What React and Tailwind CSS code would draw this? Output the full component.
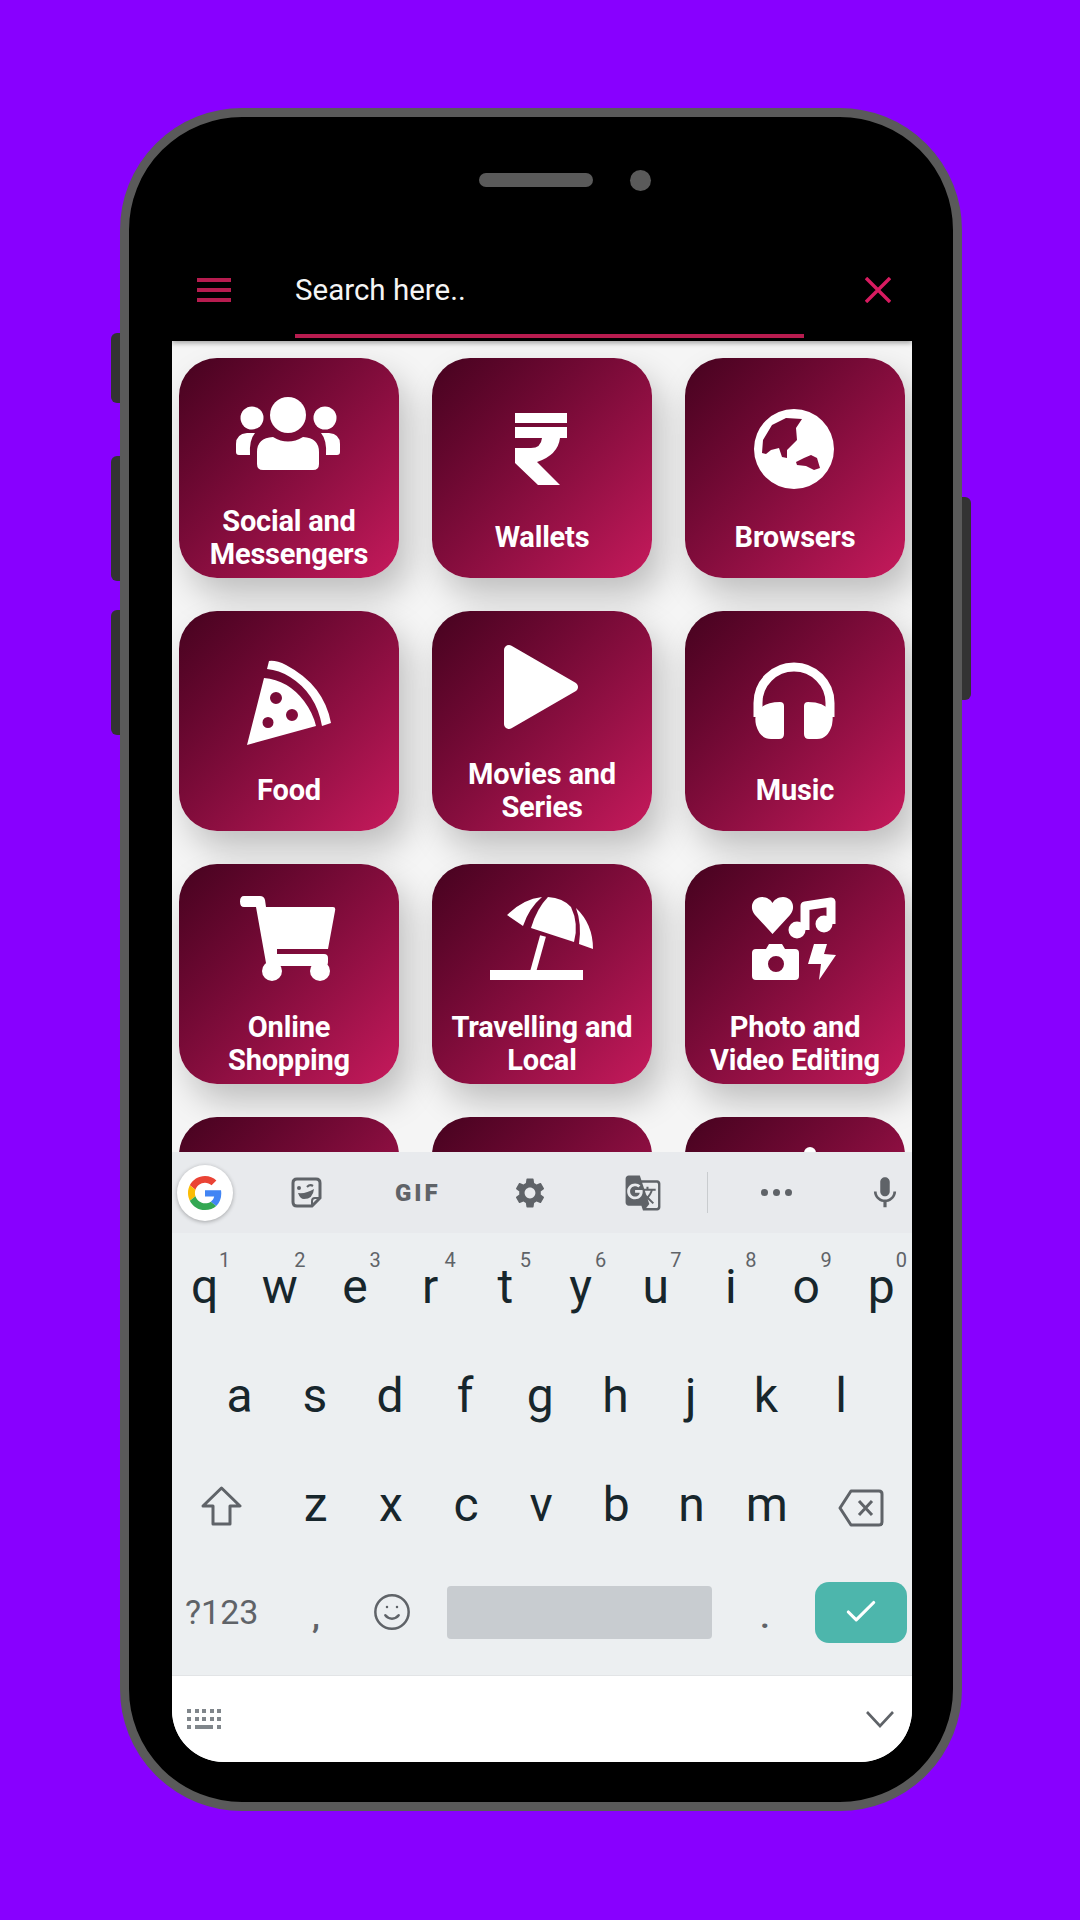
import { Check, Smile } from 'lucide-react';
import { MdSettings, MdMic, MdGTranslate } from 'react-icons/md';

const Svg = ({ children }) => (
    <svg viewBox="0 0 110 110" className="w-[110px] h-[110px] overflow-visible" fill="#fff">
        {children}
    </svg>
);

const PeopleIcon = () => (
    <Svg>
        <circle cx="54" cy="35" r="18" />
        <circle cx="18" cy="38" r="11.5" />
        <circle cx="91" cy="38" r="11.5" />
        <path d="M23 84V72Q23 58 39 57Q54 66 69 57Q85 58 85 72V84Q85 90 79 90H29Q23 90 23 84Z" />
        <path d="M2 72V64Q2 54 13 53L21 53Q15 60 16 75H5Q2 75 2 72Z" />
        <path d="M106 72V64Q106 54 95 53L87 53Q93 60 92 75H103Q106 75 106 72Z" />
    </Svg>
);

const RupeeIcon = () => (
    <Svg>
        <path d="M28 33H80V43H28ZM28 47H80V58H28Z" />
        <path d="M28 68H44Q54 68 55 58H73Q71 75 50 82L73 105H51L28 83Z" />
    </Svg>
);

const GlobeIcon = () => (
    <Svg>
        <path
            fillRule="evenodd"
            d="M54 29a40 40 0 1 0 0 80a40 40 0 1 0 0-80ZM22 73L23 60L32 45L46 38L62 39L56 48L57 60L47 70L47 78L42 77L39 68L31 70L26 74ZM56 82L64 78L71 75L77 78L80 88L74 90L66 86L57 85Z"
        />
    </Svg>
);

const PizzaIcon = () => (
    <Svg>
        <path d="M35 28Q42 27 52 32Q90 52 97 90L88 93Q82 60 56 44Q45 37 33 36Z" />
        <path
            fillRule="evenodd"
            d="M30 45Q54 47 70 68Q79 80 82 93L13 112ZM42 59a6 6 0 1 0 0 12a6 6 0 1 0 0-12ZM58 76a6 6 0 1 0 0 12a6 6 0 1 0 0-12ZM34 84a5.5 5.5 0 1 0 0 11a5.5 5.5 0 1 0 0-11Z"
        />
    </Svg>
);

const PlayIcon = () => (
    <Svg>
        <path d="M22 17L86 54L22 91Z" stroke="#fff" strokeWidth="10" strokeLinejoin="round" />
    </Svg>
);

const HeadphonesIcon = () => (
    <Svg>
        <path d="M18 84V70A36 36 0 0 1 90 70V84" fill="none" stroke="#fff" strokeWidth="9" />
        <path d="M44 73V101Q44 106 39 106H31Q20 106 16 92Q14 82 18 78Q24 69 40 69Q44 69 44 73Z" />
        <path d="M64 73V101Q64 106 69 106H77Q88 106 92 92Q94 82 90 78Q84 69 68 69Q64 69 64 73Z" />
    </Svg>
);

const CartIcon = () => (
    <Svg>
        <path d="M10 10H26Q30 10 31 14L32 21H99Q102 21 101 25L94 63H43V68H90Q94 68 94 72V76Q94 80 90 80H36Q33 80 32 77L22 21H10Q6 21 6 15.5Q6 10 10 10Z" />
        <circle cx="38" cy="85" r="10" />
        <circle cx="86" cy="85" r="10" />
    </Svg>
);

const UmbrellaIcon = () => (
    <Svg>
        <path d="M20 29Q36 13 55 11Q42 22 36 40Z" />
        <path d="M61 11Q76 12 84 21Q92 38 87 56L44 42Q50 22 61 11Z" />
        <path d="M89 22Q106 38 106 63L92 58Q95 38 89 22Z" />
        <path d="M56 50L46 86" stroke="#fff" strokeWidth="6" />
        <path d="M3 84H96V94H3Z" />
    </Svg>
);

const MediaIcon = () => (
    <Svg>
        <path d="M32.5 48L15 29C8 20 14 11 22 11C27 11 31 14 32.5 17C34 14 38 11 43 11C51 11 57 20 50 29Z" />
        <path d="M65 44V20L91 16V38" fill="none" stroke="#fff" strokeWidth="9" strokeLinejoin="round" />
        <circle cx="57" cy="44" r="8.5" />
        <circle cx="84" cy="38" r="8.5" />
        <path
            fillRule="evenodd"
            d="M26 63L29 58H42L45 63H55Q59 63 59 67V90Q59 94 55 94H16Q12 94 12 90V67Q12 63 16 63ZM36 70a8 8 0 1 0 0 16a8 8 0 1 0 0-16Z"
        />
        <path d="M74 58H87L84 68L96 69L79 94L81 78H68Z" />
    </Svg>
);

const categories = [
    { lines: ['Social and', 'Messengers'], icon: <PeopleIcon /> },
    { lines: ['Wallets'], icon: <RupeeIcon /> },
    { lines: ['Browsers'], icon: <GlobeIcon /> },
    { lines: ['Food'], icon: <PizzaIcon /> },
    { lines: ['Movies and', 'Series'], icon: <PlayIcon /> },
    { lines: ['Music'], icon: <HeadphonesIcon /> },
    { lines: ['Online', 'Shopping'], icon: <CartIcon /> },
    { lines: ['Travelling and', 'Local'], icon: <UmbrellaIcon /> },
    { lines: ['Photo and', 'Video Editing'], icon: <MediaIcon /> },
];

function CategoryCard({ lines, icon }) {
    return (
        <div className="w-[220px] h-[220px] rounded-[38px] bg-linear-to-br from-[#46031f] to-[#c61a5c] shadow-[10px_18px_34px_rgba(0,0,0,0.22)] flex flex-col items-center text-white">
            <div className="mt-[22px] w-[110px] h-[110px]">{icon}</div>
            <div className="mt-[14px] h-[67px] flex flex-col justify-center items-center text-[29px] leading-[33px] font-bold tracking-[-0.2px] whitespace-nowrap">
                {lines.map((line) => (
                    <span key={line}>{line}</span>
                ))}
            </div>
        </div>
    );
}

const row1 = [
    ['q', '1'], ['w', '2'], ['e', '3'], ['r', '4'], ['t', '5'],
    ['y', '6'], ['u', '7'], ['i', '8'], ['o', '9'], ['p', '0'],
];

const Key = ({ label, hint }) => (
    <div className="relative shrink-0 w-[75.2px] flex justify-center">
        <span>{label}</span>
        {hint && (
            <span className="absolute left-[52px] top-[-19px] text-[20px] leading-[18px] text-[#5f6368]">{hint}</span>
        )}
    </div>
);

function Keyboard() {
    return (
        <div className="shrink-0 text-[48px] leading-[34px] text-[#17262c] bg-[#eceff1]">
            <div className="h-[81px] bg-[#e8eaed] flex items-center text-[#5f6368]">
                <div className="ml-[5px] w-[56px] h-[56px] rounded-full bg-white shadow-[0_1px_4px_rgba(0,0,0,0.3)] flex items-center justify-center">
                    <svg viewBox="0 0 48 48" className="w-[34px] h-[34px]">
                        <path fill="#EA4335" d="M24 9.5c3.54 0 6.71 1.22 9.21 3.6l6.85-6.85C35.9 2.38 30.47 0 24 0 14.62 0 6.51 5.38 2.56 13.22l7.98 6.19C12.43 13.72 17.74 9.5 24 9.5z" />
                        <path fill="#4285F4" d="M46.98 24.55c0-1.57-.15-3.09-.38-4.55H24v9.02h12.94c-.58 2.96-2.26 5.48-4.78 7.18l7.73 6c4.51-4.18 7.09-10.36 7.09-17.65z" />
                        <path fill="#FBBC05" d="M10.53 28.59c-.48-1.45-.76-2.99-.76-4.59s.27-3.14.76-4.59l-7.98-6.19C.92 16.46 0 20.12 0 24c0 3.88.92 7.54 2.56 10.78l7.97-6.19z" />
                        <path fill="#34A853" d="M24 48c6.48 0 11.93-2.13 15.89-5.81l-7.73-6c-2.15 1.45-4.92 2.3-8.16 2.3-6.26 0-11.57-4.22-13.47-9.91l-7.98 6.19C6.51 42.62 14.62 48 24 48z" />
                    </svg>
                </div>
                <svg viewBox="0 0 31 31" className="ml-[58px] w-[31px] h-[31px]" fill="none" stroke="#5f6368" strokeWidth="3">
                    <path d="M6 2H25Q29 2 29 6V21L21 29H6Q2 29 2 25V6Q2 2 6 2Z" />
                    <path d="M21 29V24Q21 21 24 21H29" strokeWidth="2" />
                    <circle cx="8" cy="11" r="2" fill="#5f6368" stroke="none" />
                    <path d="M16 10Q19 7 22 9" strokeWidth="2.2" />
                    <path d="M7 16Q15 17 23 12Q22 22 13 22Q9 22 7 16Z" fill="#5f6368" stroke="none" />
                </svg>
                <span className="ml-[73px] w-[44px] text-[24px] leading-[24px] font-black tracking-[3px] text-[#5f6368]">GIF</span>
                <MdSettings className="ml-[73px] w-[36px] h-[36px]" color="#5f6368" />
                <MdGTranslate className="ml-[76px] w-[38px] h-[38px]" color="#5f6368" />
                <div className="ml-[45px] w-px h-[41px] bg-[#c9cccf]" />
                <div className="ml-[53px] w-[31px] flex justify-between">
                    <div className="w-[7px] h-[7px] rounded-full bg-[#5f6368]" />
                    <div className="w-[7px] h-[7px] rounded-full bg-[#5f6368]" />
                    <div className="w-[7px] h-[7px] rounded-full bg-[#5f6368]" />
                </div>
                <MdMic className="ml-[74px] w-[38px] h-[38px]" color="#5f6368" />
            </div>

            <div className="h-[108px] flex items-center ml-[-5px]">
                {row1.map(([label, hint]) => (
                    <Key key={label} label={label} hint={hint} />
                ))}
            </div>
            <div className="h-[110px] flex items-center ml-[30px]">
                {['a', 's', 'd', 'f', 'g', 'h', 'j', 'k', 'l'].map((label) => (
                    <Key key={label} label={label} />
                ))}
            </div>
            <div className="h-[108px] flex items-center">
                <div className="w-[106px] pl-[29px] pt-[2px]">
                    <svg viewBox="0 0 41 40" className="w-[41px] h-[40px]" fill="none" stroke="#5f6368" strokeWidth="3">
                        <path d="M20.5 2L39 20H29V38H12V20H2Z" strokeLinejoin="round" />
                    </svg>
                </div>
                {['z', 'x', 'c', 'v', 'b', 'n', 'm'].map((label) => (
                    <Key key={label} label={label} />
                ))}
                <svg viewBox="0 0 46 38" className="ml-[33px] mt-[6px] w-[48px] h-[38px]" fill="none" stroke="#5f6368" strokeWidth="3">
                    <path d="M13 2H41Q44 2 44 5V33Q44 36 41 36H13L2 19Z" strokeLinejoin="round" />
                    <path d="M21 12L34 26M34 12L21 26" />
                </svg>
            </div>
            <div className="h-[106px] flex items-center text-[#5f6368]">
                <span className="w-[100px] pl-[13px] text-[34px] leading-[40px]">?123</span>
                <span className="w-[88px] text-center text-[32px] leading-[40px] font-bold pt-[10px]">,</span>
                <Smile className="ml-[12px] w-[40px] h-[40px]" strokeWidth={1.5} />
                <div className="ml-[35px] w-[265px] h-[53px] rounded-[4px] bg-[#c8ccd0]" />
                <span className="w-[106px] text-center text-[32px] leading-[40px] font-bold pt-[10px]">.</span>
                <div className="ml-[-3px] w-[92px] h-[61px] rounded-[14px] bg-[#4db6ac] flex items-center justify-center">
                    <Check className="w-[38px] h-[38px] text-white" strokeWidth={2} />
                </div>
            </div>
            <div className="h-[10px]" />
            <div className="h-[87px] bg-white border-t border-[#e2e4e6] flex items-center justify-between pl-[15px] pr-[18px]">
                <div className="grid grid-cols-5 gap-x-[4px] gap-y-[4px] w-[34px]">
                    {Array.from({ length: 10 }).map((_, i) => (
                        <div key={i} className="w-[4px] h-[4px] bg-[#80868b]" />
                    ))}
                    <div className="w-[4px] h-[4px] bg-[#80868b]" />
                    <div className="col-span-3 h-[4px] bg-[#80868b]" />
                    <div className="w-[4px] h-[4px] bg-[#80868b]" />
                </div>
                <svg viewBox="0 0 28 17" className="w-[28px] h-[17px]" fill="none" stroke="#5f6368" strokeWidth="2.6">
                    <path d="M1 1L14 15L27 1" />
                </svg>
            </div>
        </div>
    );
}

export default function App() {
    return (
        <div className="w-[1080px] h-[1920px] bg-[#8800ff] pl-[120px] pt-[108px] font-['Roboto',sans-serif] overflow-hidden">
            <div className="relative w-[842px] h-[1703px] rounded-[122px] border-[9px] border-[#5a5a5a] bg-black pl-[43px]">
                {/* side buttons */}
                <div className="absolute left-[-18px] top-[216px] w-[9px] h-[70px] rounded-l-[6px] bg-[#333]" />
                <div className="absolute left-[-18px] top-[339px] w-[9px] h-[125px] rounded-l-[6px] bg-[#333]" />
                <div className="absolute left-[-18px] top-[493px] w-[9px] h-[125px] rounded-l-[6px] bg-[#333]" />
                <div className="absolute right-[-18px] top-[380px] w-[9px] h-[203px] rounded-r-[6px] bg-[#333]" />

                <div className="w-[740px] h-[1645px] rounded-t-[100px] rounded-b-[52px] overflow-hidden flex flex-col">
                    <div className="relative z-10 shrink-0 h-[224px] bg-black shadow-[0_2px_5px_rgba(0,0,0,0.35)]">
                        <div className="pt-[52px] h-[74px] flex items-center pl-[307px]">
                            <div className="w-[114px] h-[14px] rounded-full bg-[#5a5a5a]" />
                            <div className="ml-[37px] w-[21px] h-[21px] rounded-full bg-[#5a5a5a]" />
                        </div>
                        <div className="mt-[71px] flex items-start pl-[25px]">
                            <div className="mt-[16px] w-[34px] h-[24px] flex flex-col justify-between">
                                <div className="h-[4px] bg-[#b71c4f]" />
                                <div className="h-[4px] bg-[#b71c4f]" />
                                <div className="h-[4px] bg-[#b71c4f]" />
                            </div>
                            <div className="ml-[64px] w-[509px] h-[76px] border-b-[4px] border-[#b71c4f]">
                                <span className="block h-[56px] leading-[56px] text-[29.5px] text-[#f5f5f5]">Search here..</span>
                            </div>
                            <svg viewBox="0 0 26 26" className="ml-[61px] mt-[15px] w-[26px] h-[26px]" stroke="#d81b60" strokeWidth="3.4">
                                <path d="M1 1L25 25M25 1L1 25" />
                            </svg>
                        </div>
                    </div>

                    <div className="flex-1 min-h-0 overflow-hidden bg-[#f5f5f5] pt-[17px] px-[7px]">
                        <div className="grid grid-cols-[220px_220px_220px] justify-between gap-y-[33px]">
                            {categories.map((category) => (
                                <CategoryCard key={category.lines[0]} lines={category.lines} icon={category.icon} />
                            ))}
                            <div className="w-[220px] h-[220px] rounded-[38px] bg-linear-to-br from-[#46031f] to-[#c61a5c]" />
                            <div className="w-[220px] h-[220px] rounded-[38px] bg-linear-to-br from-[#46031f] to-[#c61a5c]" />
                            <div className="w-[220px] h-[220px] rounded-[38px] bg-linear-to-br from-[#46031f] to-[#c61a5c] flex justify-center pl-[30px] pt-[30px]">
                                <div className="w-[12px] h-[6px] rounded-t-full bg-white" />
                            </div>
                        </div>
                    </div>

                    <Keyboard />
                </div>
            </div>
        </div>
    );
}
